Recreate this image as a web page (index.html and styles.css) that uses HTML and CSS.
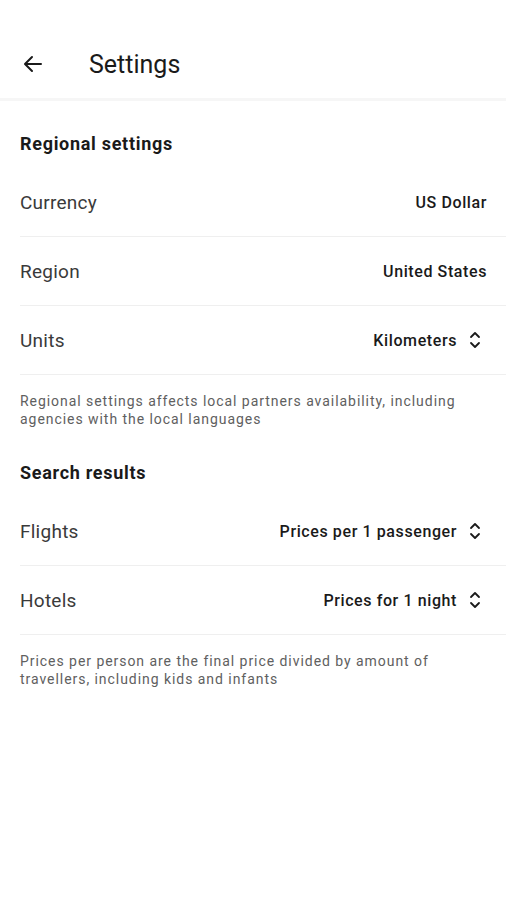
FILE: index.html
```html
<!DOCTYPE html>
<html lang="en">
<head>
  <meta charset="UTF-8" />
  <meta name="viewport" content="width=device-width, initial-scale=1.0" />
  <title>Settings</title>
  <link rel="stylesheet" href="styles.css">
</head>
<body>

  <!-- Top bar -->
  <header class="topbar">
    <button class="back" aria-label="Back">
      <svg width="24" height="24" viewBox="0 0 24 24" fill="none" stroke="#1a1a1a" stroke-width="2" stroke-linecap="round" stroke-linejoin="round">
        <path d="M20 12H4.5M11 5l-7 7 7 7"/>
      </svg>
    </button>
    <h1 class="title">Settings</h1>
  </header>

  <main class="content">
    <!-- Regional settings -->
    <h2 class="section-title">Regional settings</h2>
    <div class="row">
      <span class="label">Currency</span>
      <span class="value">US Dollar</span>
    </div>
    <div class="row">
      <span class="label">Region</span>
      <span class="value">United States</span>
    </div>
    <div class="row">
      <span class="label">Units</span>
      <span class="value">Kilometers
        <svg class="updown" width="24" height="24" viewBox="0 0 24 24" fill="none" stroke="#1a1a1a" stroke-width="1.8" stroke-linecap="round" stroke-linejoin="round"><path d="M8 9l4-4 4 4M8 15l4 4 4-4"/></svg>
      </span>
    </div>
    <p class="note">Regional settings affects local partners availability, including agencies with the local languages</p>

    <!-- Search results -->
    <h2 class="section-title">Search results</h2>
    <div class="row">
      <span class="label">Flights</span>
      <span class="value">Prices per 1 passenger
        <svg class="updown" width="24" height="24" viewBox="0 0 24 24" fill="none" stroke="#1a1a1a" stroke-width="1.8" stroke-linecap="round" stroke-linejoin="round"><path d="M8 9l4-4 4 4M8 15l4 4 4-4"/></svg>
      </span>
    </div>
    <div class="row">
      <span class="label">Hotels</span>
      <span class="value">Prices for 1 night
        <svg class="updown" width="24" height="24" viewBox="0 0 24 24" fill="none" stroke="#1a1a1a" stroke-width="1.8" stroke-linecap="round" stroke-linejoin="round"><path d="M8 9l4-4 4 4M8 15l4 4 4-4"/></svg>
      </span>
    </div>
    <p class="note">Prices per person are the final price divided by amount of travellers, including kids and infants</p>
  </main>

</body>
</html>
```

FILE: styles.css
```css
body {
  margin: 0;
  background: #fff;
  font-family: Roboto, "Noto Sans", sans-serif;
  color: #1a1a1a;
}

/* Header bar */
.topbar {
  height: 101px;
  display: flex;
  align-items: center;
  padding: 30px 0 0 21px;
  box-sizing: border-box;
  border-bottom: 3px solid #f6f6f6;
}

.back {
  border: none;
  background: none;
  padding: 0;
  width: 24px;
  height: 24px;
  display: flex;
}

.title {
  margin: 0 0 0 44px;
  font-size: 25px;
  font-weight: 400;
  color: #1a1a1a;
}

/* Page content */
.content {
  padding-left: 20px;
}

.section-title {
  margin: 30px 0 11px;
  font-size: 18px;
  line-height: 26px;
  font-weight: 700;
  letter-spacing: 0.7px;
  color: #1a1a1a;
}

.row {
  height: 68px;
  display: flex;
  align-items: center;
  justify-content: space-between;
  padding-right: 19px;
  border-bottom: 1px solid #efefef;
}

.label {
  font-size: 19px;
  letter-spacing: 0.25px;
  color: #3a3a3a;
}

.value {
  display: flex;
  align-items: center;
  gap: 6px;
  font-size: 16px;
  font-weight: 500;
  letter-spacing: 0.6px;
  color: #1a1a1a;
}

.updown {
  display: block;
}

/* Helper text under a group; bottom margin collapses with the next title */
.note {
  margin: 17px 20px 32px 0;
  font-size: 14px;
  line-height: 18px;
  letter-spacing: 0.95px;
  color: #606060;
}
```
